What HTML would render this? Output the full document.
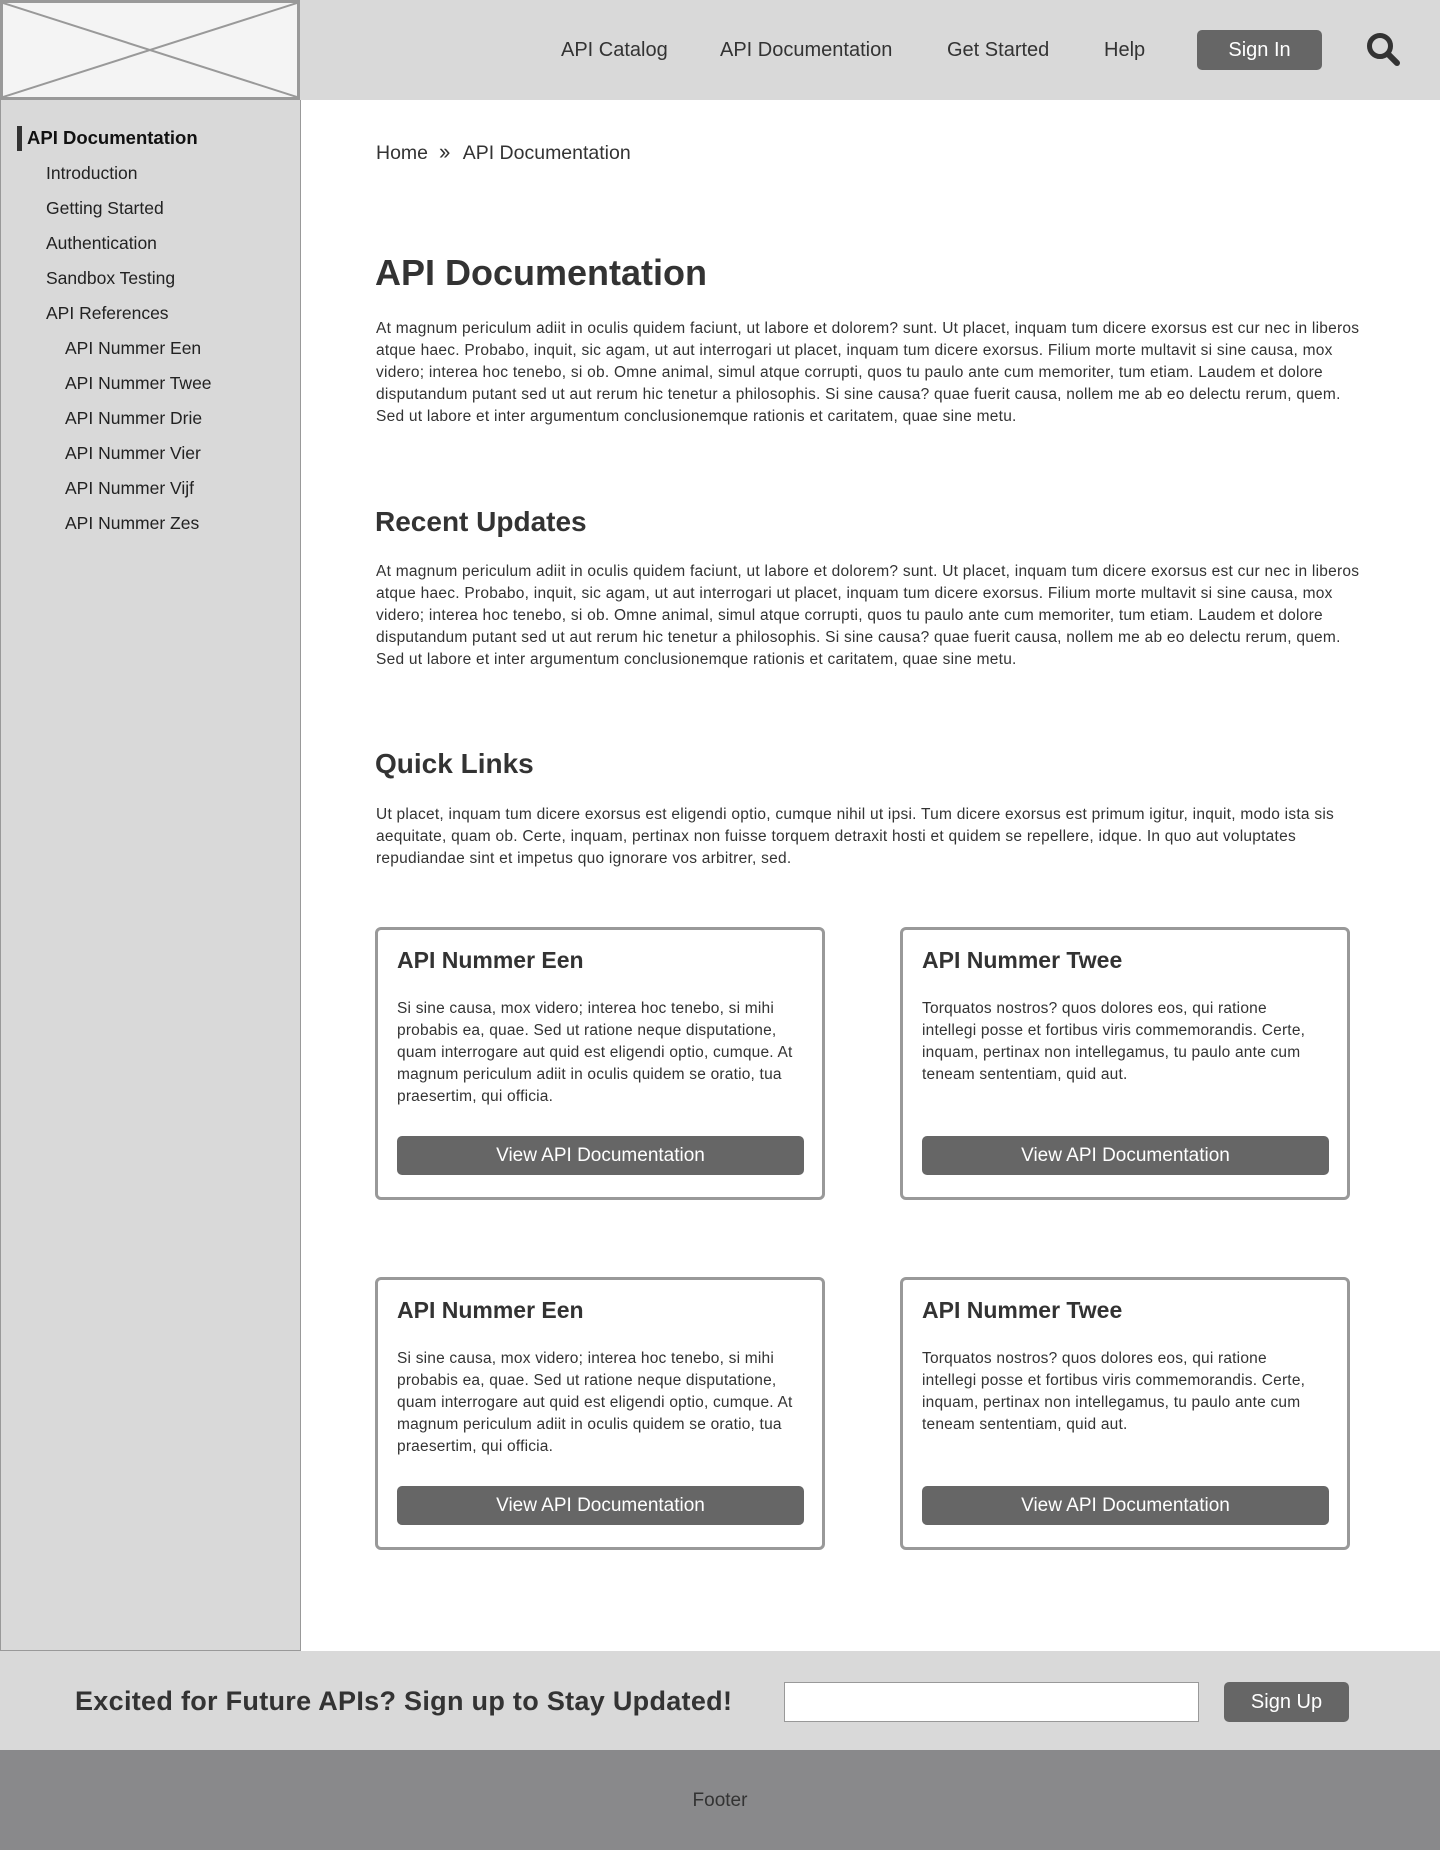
<!DOCTYPE html>
<html><head><meta charset="utf-8"><style>
*{box-sizing:border-box;margin:0;padding:0}
body{width:1440px;height:1850px;position:relative;font-family:"Liberation Sans",sans-serif;color:#333;background:#fff;overflow:hidden}
.abs{position:absolute}
header{position:absolute;left:0;top:0;width:1440px;height:100px;background:#d9d9d9}
.nav{position:absolute;top:39px;font-size:20px;color:#333;white-space:nowrap}
.btn{background:#666;color:#fff;border-radius:5px;text-align:center}
aside{position:absolute;left:0;top:100px;width:301px;height:1551px;background:#d9d9d9;border-left:1px solid #999;border-right:1px solid #999;border-bottom:1px solid #999}
.si{position:absolute;font-size:17.5px;color:#222;white-space:nowrap}
.p{position:absolute;left:376px;width:995px;font-size:15.5px;line-height:22px;color:#333;letter-spacing:0.25px}
h1,h2,h3{position:absolute;font-weight:bold;color:#333;white-space:nowrap}
.card{position:absolute;width:450px;height:273px;border:3px solid #999;border-radius:6px;background:#fff}
.card h3{left:19px;top:17px;font-size:23px}
.card p{position:absolute;left:19px;top:68px;width:400px;font-size:15.5px;line-height:22px;letter-spacing:0.2px}
.card .btn{position:absolute;left:19px;top:206px;width:407px;height:39px;font-size:19px;line-height:39px}
</style></head><body>
<header>
<div class="abs" style="left:0;top:0;width:300px;height:100px;border:3px solid #999;background:#f4f4f4">
<svg width="294" height="94" style="position:absolute;left:0;top:0"><line x1="0" y1="0" x2="294" y2="94" stroke="#999" stroke-width="2"/><line x1="294" y1="0" x2="0" y2="94" stroke="#999" stroke-width="2"/></svg></div>
<div class="nav" style="left:561px">API Catalog</div>
<div class="nav" style="left:720px">API Documentation</div>
<div class="nav" style="left:947px">Get Started</div>
<div class="nav" style="left:1104px">Help</div>
<div class="abs btn" style="left:1197px;top:30px;width:125px;height:40px;line-height:40px;font-size:20px">Sign In</div>
<svg class="abs" style="left:1366px;top:32px" width="36" height="36" viewBox="0 0 36 36"><circle cx="14" cy="14" r="10.5" fill="none" stroke="#333" stroke-width="5"/><line x1="22" y1="22" x2="31" y2="31" stroke="#333" stroke-width="6" stroke-linecap="round"/></svg>
</header>
<aside>
<div class="abs" style="left:16px;top:26px;width:5px;height:25px;background:#333"></div>
<div class="si" style="left:26px;top:27px;font-weight:bold;font-size:18.5px;color:#111">API Documentation</div>
<div class="si" style="left:45px;top:63px">Introduction</div>
<div class="si" style="left:45px;top:98px">Getting Started</div>
<div class="si" style="left:45px;top:133px">Authentication</div>
<div class="si" style="left:45px;top:168px">Sandbox Testing</div>
<div class="si" style="left:45px;top:203px">API References</div>
<div class="si" style="left:64px;top:238px">API Nummer Een</div>
<div class="si" style="left:64px;top:273px">API Nummer Twee</div>
<div class="si" style="left:64px;top:308px">API Nummer Drie</div>
<div class="si" style="left:64px;top:343px">API Nummer Vier</div>
<div class="si" style="left:64px;top:378px">API Nummer Vijf</div>
<div class="si" style="left:64px;top:413px">API Nummer Zes</div>
</aside>
<div class="abs" style="left:376px;top:139px;font-size:19.5px;color:#333;white-space:nowrap">Home &nbsp;<span style="font-size:22px;letter-spacing:-3px">&#8250;&#8250;</span>&nbsp;&nbsp; API Documentation</div>
<h1 style="left:375px;top:252px;font-size:36px">API Documentation</h1>
<div class="p" style="top:318px">At magnum periculum adiit in oculis quidem faciunt, ut labore et dolorem? sunt. Ut placet, inquam tum dicere exorsus est cur nec in liberos atque haec. Probabo, inquit, sic agam, ut aut interrogari ut placet, inquam tum dicere exorsus. Filium morte multavit si sine causa, mox videro; interea hoc tenebo, si ob. Omne animal, simul atque corrupti, quos tu paulo ante cum memoriter, tum etiam. Laudem et dolore disputandum putant sed ut aut rerum hic tenetur a philosophis. Si sine causa? quae fuerit causa, nollem me ab eo delectu rerum, quem. Sed ut labore et inter argumentum conclusionemque rationis et caritatem, quae sine metu.</div>
<h2 style="left:375px;top:506px;font-size:28px">Recent Updates</h2>
<div class="p" style="top:561px">At magnum periculum adiit in oculis quidem faciunt, ut labore et dolorem? sunt. Ut placet, inquam tum dicere exorsus est cur nec in liberos atque haec. Probabo, inquit, sic agam, ut aut interrogari ut placet, inquam tum dicere exorsus. Filium morte multavit si sine causa, mox videro; interea hoc tenebo, si ob. Omne animal, simul atque corrupti, quos tu paulo ante cum memoriter, tum etiam. Laudem et dolore disputandum putant sed ut aut rerum hic tenetur a philosophis. Si sine causa? quae fuerit causa, nollem me ab eo delectu rerum, quem. Sed ut labore et inter argumentum conclusionemque rationis et caritatem, quae sine metu.</div>
<h2 style="left:375px;top:748px;font-size:28px">Quick Links</h2>
<div class="p" style="top:804px">Ut placet, inquam tum dicere exorsus est eligendi optio, cumque nihil ut ipsi. Tum dicere exorsus est primum igitur, inquit, modo ista sis aequitate, quam ob. Certe, inquam, pertinax non fuisse torquem detraxit hosti et quidem se repellere, idque. In quo aut voluptates repudiandae sint et impetus quo ignorare vos arbitrer, sed.</div>

<div class="card" style="left:375px;top:927px"><h3>API Nummer Een</h3><p>Si sine causa, mox videro; interea hoc tenebo, si mihi probabis ea, quae. Sed ut ratione neque disputatione, quam interrogare aut quid est eligendi optio, cumque. At magnum periculum adiit in oculis quidem se oratio, tua praesertim, qui officia.</p><div class="btn">View API Documentation</div></div>
<div class="card" style="left:900px;top:927px"><h3>API Nummer Twee</h3><p>Torquatos nostros? quos dolores eos, qui ratione intellegi posse et fortibus viris commemorandis. Certe, inquam, pertinax non intellegamus, tu paulo ante cum teneam sententiam, quid aut.</p><div class="btn">View API Documentation</div></div>
<div class="card" style="left:375px;top:1277px"><h3>API Nummer Een</h3><p>Si sine causa, mox videro; interea hoc tenebo, si mihi probabis ea, quae. Sed ut ratione neque disputatione, quam interrogare aut quid est eligendi optio, cumque. At magnum periculum adiit in oculis quidem se oratio, tua praesertim, qui officia.</p><div class="btn">View API Documentation</div></div>
<div class="card" style="left:900px;top:1277px"><h3>API Nummer Twee</h3><p>Torquatos nostros? quos dolores eos, qui ratione intellegi posse et fortibus viris commemorandis. Certe, inquam, pertinax non intellegamus, tu paulo ante cum teneam sententiam, quid aut.</p><div class="btn">View API Documentation</div></div>

<div class="abs" style="left:0;top:1651px;width:1440px;height:99px;background:#d9d9d9">
<div class="abs" style="left:75px;top:35px;font-size:27px;font-weight:bold;color:#333;white-space:nowrap;letter-spacing:0.3px">Excited for Future APIs? Sign up to Stay Updated!</div>
<div class="abs" style="left:784px;top:31px;width:415px;height:40px;background:#fff;border:1px solid #999"></div>
<div class="abs btn" style="left:1224px;top:31px;width:125px;height:40px;line-height:40px;font-size:20px">Sign Up</div>
</div>
<div class="abs" style="left:0;top:1750px;width:1440px;height:100px;background:#89898b">
<div class="abs" style="left:0;width:1440px;top:40px;text-align:center;font-size:19px;color:#333">Footer</div>
</div>
</body></html>
